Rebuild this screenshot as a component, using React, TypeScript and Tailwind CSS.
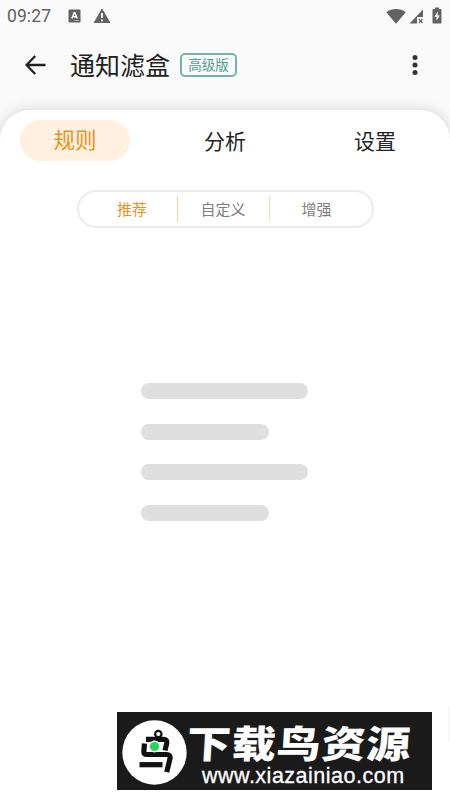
const cjk = 'font-["Noto_Sans_CJK_SC",sans-serif]';

function StatusBar() {
  return (
    <div className="flex h-8 items-center pl-[7px] pr-[7px] text-[#626262]">
      <span className="w-[60px] whitespace-nowrap font-[Roboto,sans-serif] text-[17.5px] leading-5 tracking-[0.1px]">09:27</span>
      <svg width="13" height="14" viewBox="0 0 13 14" className="ml-[1px] -mt-px">
        <rect x="0.5" y="0.5" width="12" height="13" rx="1" fill="currentColor" />
        <path d="M3.8 9.5 6.2 3.8h.7l2.3 5.7M4.8 7.8h3.5" fill="none" stroke="#fff" strokeWidth="1.5" />
        <path d="M6 11.5h5" stroke="#aaa" />
      </svg>
      <svg width="18" height="16" viewBox="0 0 18 16" className="-mt-px ml-3">
        <path d="M9 .2 17.5 15H.5Z" fill="currentColor" />
        <path d="M9 5v5M9 11.5v2" stroke="#fff" strokeWidth="1.8" />
      </svg>
      <div className="-mt-px ml-auto flex items-center">
        <svg width="20" height="16" viewBox="0 0 20 16">
          <path d="M.3 4.2C5.5-.2 14.5-.2 19.7 4.2L10 15.7Z" fill="currentColor" />
        </svg>
        <svg width="15" height="15" viewBox="0 0 15 15" className="ml-[3px] mt-px">
          <path d="M14 .5V8H8v6.5H.5Z" fill="currentColor" />
          <path d="m9.7 10 3.8 4m0-4-3.8 4" stroke="currentColor" strokeWidth="1.1" />
        </svg>
        <svg width="10" height="17" viewBox="0 0 10 17" className="ml-[8px] mr-px">
          <path d="M3 .5h4V2h1.5q1 0 1 1v12.5q0 1-1 1h-7q-1 0-1-1V3q0-1 1-1H3Z" fill="currentColor" />
          <path d="M5.8 4.5 2.3 9.7h2.2v4.1l3.3-5.4H5.6Z" fill="#fff" />
        </svg>
      </div>
    </div>
  );
}

function TitleBar() {
  return (
    <header className="flex h-[66px] items-center pl-[25px] text-[#202020]">
      <svg width="21" height="20" viewBox="0 0 21 20" fill="none" stroke="currentColor" strokeWidth="2.3">
        <path d="M10.2 1 1.5 10l8.7 9M1.8 10H20.5" />
      </svg>
      <h1 className="-mt-[2px] ml-6 w-[100px] whitespace-nowrap text-[25px] leading-8">通知滤盒</h1>
      <span className="ml-[10px] flex h-6 w-[57px] items-center justify-center whitespace-nowrap rounded-[5px] border-2 border-[#74b5a8] text-[13.5px] leading-none text-[#4e9f8f]">高级版</span>
      <svg width="6" height="20" viewBox="0 0 6 20" className="ml-auto mr-8" fill="#333">
        <circle cx="3" cy="2.5" r="2.5" />
        <circle cx="3" cy="10" r="2.5" />
        <circle cx="3" cy="17.5" r="2.5" />
      </svg>
    </header>
  );
}

function Tabs() {
  return (
    <nav className="flex justify-between px-5 pt-[10px] text-[21px] leading-none text-[#252525]">
      <div className="flex h-[41px] w-[110px] items-center justify-center rounded-full bg-[#fff0df] pb-[3px] text-[21.5px] text-[#e69420]">规则</div>
      <div className="flex h-[41px] w-[110px] items-center justify-center">分析</div>
      <div className="flex h-[41px] w-[110px] items-center justify-center">设置</div>
    </nav>
  );
}

function Filters() {
  return (
    <div className="mx-auto mt-[29px] flex h-[38px] w-[297px] items-center rounded-full border-2 border-[#ececec] pl-[7px] text-[15px] leading-none text-[#7d7d7d]">
      <div className="flex h-[26px] w-[91px] items-center justify-center pb-px pl-[2px] text-[#e69420]">推荐</div>
      <div className="h-[26px] w-px bg-[#f9d29a]" />
      <div className="flex h-[26px] w-[91px] items-center justify-center pb-px">自定义</div>
      <div className="h-[26px] w-px bg-[#f8dfb5]" />
      <div className="flex h-[26px] w-[94px] items-center justify-center pb-px">增强</div>
    </div>
  );
}

function Watermark() {
  return (
    <div className="absolute left-[117px] top-[712px] flex h-[78px] w-[315px] bg-[#1a1a1a] pl-[5px] pt-2 text-white">
      <svg width="65" height="65" viewBox="0 0 65 65" fill="none">
        <circle cx="32.5" cy="32.5" r="32.2" fill="#fff" />
        <g stroke="#111" strokeWidth="5.2" strokeLinejoin="round">
          <circle cx="36.3" cy="14" r="3.2" strokeWidth="2.2" />
          <path d="M24 19.3h17.5q4 0 3.2 4L43 30.5" />
          <path d="M22.5 23.5l-.7 8q0 3 3 3H44.5q4.2 0 3.5 4.2l-3.3 13.5" />
          <path d="M17.5 44.7h23" />
        </g>
        <circle cx="32.5" cy="26.5" r="6" fill="#fff" />
        <circle cx="32.5" cy="26.5" r="4.6" fill="#24d65b" />
      </svg>
      <div className="flex flex-col">
        <div className="ml-0 mt-px h-[42px] w-[200px] origin-left -skew-x-3 scale-x-[1.16] whitespace-nowrap text-[38px] font-black leading-[42px] tracking-[0.7px]">下载鸟资源</div>
        <div className="ml-[15px] mt-px whitespace-nowrap font-['Liberation_Sans',sans-serif] text-[21.5px] leading-6 tracking-[0.5px] [-webkit-text-stroke:0.3px_white]">www.xiazainiao.com</div>
      </div>
    </div>
  );
}

export default function App() {
  return (
    <div className={`relative flex h-[800px] w-[450px] flex-col overflow-hidden bg-[#fafafa] ${cjk}`}>
      <StatusBar />
      <TitleBar />
      <main className="mt-3 flex-1 rounded-t-[30px] bg-white shadow-[0_0_14px_rgba(0,0,0,0.16)]">
        <Tabs />
        <Filters />
        <div className="ml-[140.5px] mt-[155px] flex flex-col gap-[24.7px]">
          <div className="h-4 w-[167.5px] rounded-full bg-[#dfdfdf]" />
          <div className="h-4 w-[128.5px] rounded-full bg-[#dfdfdf]" />
          <div className="h-4 w-[167.5px] rounded-full bg-[#dfdfdf]" />
          <div className="h-4 w-[128.5px] rounded-full bg-[#dfdfdf]" />
        </div>
      </main>
      <Watermark />
      <div className="absolute right-0 top-[706px] h-9 w-0.5 bg-[#f8f8f8]" />
    </div>
  );
}
